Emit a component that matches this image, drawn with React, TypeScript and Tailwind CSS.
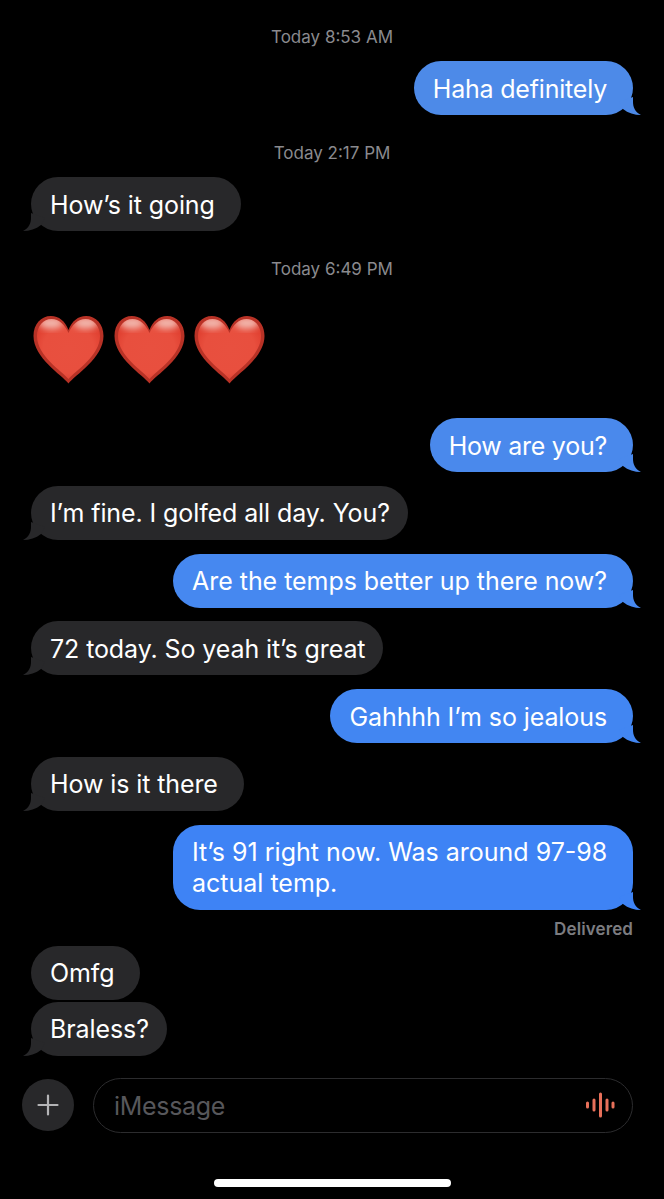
import React from 'react';

const font = { fontFamily: 'Inter, "Liberation Sans", sans-serif' };

const Tail = ({ side, color }: { side: 'left' | 'right'; color: string }) => (
  <svg
    width="22"
    height="18"
    viewBox="0 0 22 18"
    className={
      side === 'right' ? 'absolute bottom-0 right-[-8px]' : 'absolute bottom-0 left-[-8px] scale-x-[-1]'
    }
  >
    <path d="M14 0 L14 5 C14 10 16 15 22 18 C15.5 18 9 16 4 12 L0 5 Z" fill={color} />
  </svg>
);

type SentProps = { text: string; color: string; track?: string; wide?: boolean };

const Sent = ({ text, color, track = 'tracking-[-0.1px]', wide }: SentProps) => (
  <div className="flex justify-end">
    <div
      className={`relative rounded-[27px] pb-[10.5px] pl-[19px] pt-[12.5px] text-[25px] leading-[31px] text-white ${track} ${wide ? 'w-[460px] pr-[24px]' : 'pr-[26px]'}`}
      style={{ backgroundColor: color }}
    >
      {text}
      <Tail side="right" color={color} />
    </div>
  </div>
);

type ReceivedProps = { text: string; tail?: boolean; tight?: boolean };

const Received = ({ text, tail = true, tight }: ReceivedProps) => (
  <div className="flex justify-start">
    <div
      className={`relative rounded-[27px] bg-[#28282a] pb-[10.5px] pl-[19px] pt-[12.5px] text-[25px] leading-[31px] tracking-[-0.1px] text-white ${tight ? 'pr-[18px]' : 'pr-[26px]'}`}
    >
      {text}
      {tail && <Tail side="left" color="#28282a" />}
    </div>
  </div>
);

const Stamp = ({ time }: { time: string }) => (
  <div className="mb-[13px] mt-[25px] h-[24px] pt-px text-center text-[17px] leading-[24px] text-[#8a8a8e]">
    Today {time}
  </div>
);

const Heart = () => (
  <svg width="71" height="69" viewBox="0 0 71 69">
    <defs>
      <radialGradient id="heartFill" cx="50%" cy="50%" r="62%">
        <stop offset="0%" stopColor="#e8503f" />
        <stop offset="65%" stopColor="#e84f3e" />
        <stop offset="100%" stopColor="#dd3a2b" />
      </radialGradient>
      <filter id="heartBlur" x="-30%" y="-30%" width="160%" height="160%">
        <feGaussianBlur stdDeviation="3" />
      </filter>
      <clipPath id="heartClip">
        <path d="M35.5 64 C29 56 4 41 4 21 C4 11 10.5 4 18.5 4 C26 4 32 10 35.5 18 C39 10 45 4 52.5 4 C60.5 4 67 11 67 21 C67 41 42 56 35.5 64 Z" />
      </clipPath>
    </defs>
    <path
      d="M35.5 68.5 C29 60 0.5 43 0.5 21 C0.5 9 8 1 18 1 C26 1 32 6 35.5 15 C39 6 45 1 53 1 C63 1 70.5 9 70.5 21 C70.5 43 42 60 35.5 68.5 Z"
      fill="#b83226"
    />
    <path
      d="M35.5 64 C29 56 4 41 4 21 C4 11 10.5 4 18.5 4 C26 4 32 10 35.5 18 C39 10 45 4 52.5 4 C60.5 4 67 11 67 21 C67 41 42 56 35.5 64 Z"
      fill="url(#heartFill)"
    />
    <g clipPath="url(#heartClip)">
      <ellipse cx="18" cy="8" rx="12" ry="6" fill="#f2b5ab" filter="url(#heartBlur)" />
      <ellipse cx="53" cy="8" rx="12" ry="6" fill="#f2b5ab" filter="url(#heartBlur)" />
    </g>
  </svg>
);

const Waveform = () => (
  <svg width="30" height="26" viewBox="0 0 30 26" fill="none" stroke="#e8705a" strokeWidth="3" strokeLinecap="round">
    <path d="M2.5 11 V15" />
    <path d="M9 8 V18" />
    <path d="M15.5 2 V24" />
    <path d="M22 8 V18" />
    <path d="M28 11 V15" />
  </svg>
);

export default function App() {
  return (
    <div className="h-[1199px] w-[664px] overflow-hidden bg-black" style={font}>
      <div className="-mt-px px-[31px]">
        <Stamp time="8:53 AM" />
        <Sent text="Haha definitely" color="#4d8ae8" track="tracking-[-0.2px]" />
        <Stamp time="2:17 PM" />
        <Received text="How’s it going" />
        <Stamp time="6:49 PM" />

        <div className="mb-[34px] ml-[2px] mt-[35px] flex h-[69px] gap-[9.5px]">
          <Heart />
          <Heart />
          <Heart />
        </div>

        <div className="flex flex-col gap-[13.75px]">
          <Sent text="How are you?" color="#4a89ec" track="tracking-[-0.25px]" />
          <Received text="I’m fine. I golfed all day. You?" tight />
          <Sent text="Are the temps better up there now?" color="#4688f0" track="tracking-[-0.05px]" />
          <Received text="72 today. So yeah it’s great" tight />
          <Sent text="Gahhhh I’m so jealous" color="#4286f2" />
          <Received text="How is it there" />
          <Sent
            text="It’s 91 right now. Was around 97-98 actual temp."
            color="#3e83f5"
            track="tracking-normal"
            wide
          />
        </div>

        <div className="mb-[8px] mt-[8px] h-[20px] pt-px text-right text-[17px] font-semibold leading-[20px] tracking-[0.1px] text-[#7c7c80]">
          Delivered
        </div>

        <div className="flex flex-col gap-[2px]">
          <Received text="Omfg" tail={false} />
          <Received text="Braless?" tight />
        </div>
      </div>

      <div className="mt-[22px] flex items-center gap-[19px] pl-[22px] pr-[31px]">
        <div className="flex h-[52px] w-[52px] shrink-0 items-center justify-center rounded-full bg-[#28282a]">
          <svg width="22" height="22" viewBox="0 0 22 22" stroke="#b4b4b6" strokeWidth="2.2" strokeLinecap="round">
            <path d="M11 1.5 V20.5 M1.5 11 H20.5" />
          </svg>
        </div>
        <div className="flex h-[55px] flex-1 items-center justify-between rounded-full border border-[#2c2c2e] pl-[20px] pr-[17px]">
          <span className="pt-[3px] text-[25px] tracking-[-0.3px] text-[#57575b]">iMessage</span>
          <Waveform />
        </div>
      </div>

      <div className="mx-auto mt-[46px] h-[8px] w-[237px] rounded-full bg-white" />
    </div>
  );
}
